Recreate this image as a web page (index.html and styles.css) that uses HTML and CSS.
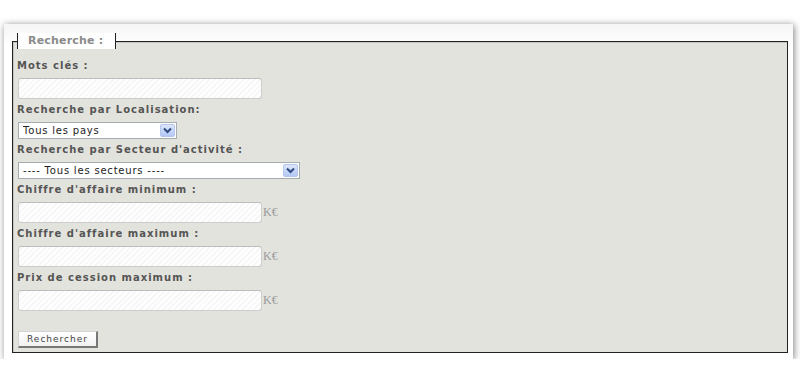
FILE: index.html
```html
<!DOCTYPE html>
<html lang="fr">
<head>
    <meta charset="UTF-8">
    <title>Recherche</title>
    <link rel="stylesheet" href="styles.css">
</head>
<body>
    <div class="card">
        <form class="search-form" action="#">
            <fieldset class="search-box">
                <legend class="search-title">Recherche :</legend>

                <div class="row">
                    <label class="row-label" for="keywords">Mots clés :</label>
                    <input type="text" id="keywords" class="text-input">
                </div>

                <div class="row">
                    <label class="row-label" for="country">Recherche par Localisation:</label>
                    <div class="select-box select-small">
                        <select id="country" class="select">
                            <option>Tous les pays</option>
                        </select>
                        <span class="select-arrow">
                            <svg width="9" height="7" viewBox="0 0 9 7"><path d="M1 1.5 L4.5 5 L8 1.5" fill="none" stroke="#2f4a80" stroke-width="2"/></svg>
                        </span>
                    </div>
                </div>

                <div class="row">
                    <label class="row-label" for="sector">Recherche par Secteur d'activité :</label>
                    <div class="select-box select-wide">
                        <select id="sector" class="select">
                            <option>---- Tous les secteurs ----</option>
                        </select>
                        <span class="select-arrow">
                            <svg width="9" height="7" viewBox="0 0 9 7"><path d="M1 1.5 L4.5 5 L8 1.5" fill="none" stroke="#2f4a80" stroke-width="2"/></svg>
                        </span>
                    </div>
                </div>

                <div class="row">
                    <label class="row-label" for="ca-min">Chiffre d'affaire minimum :</label>
                    <div class="money">
                        <input type="text" id="ca-min" class="text-input">
                        <span class="unit">K€</span>
                    </div>
                </div>

                <div class="row">
                    <label class="row-label" for="ca-max">Chiffre d'affaire maximum :</label>
                    <div class="money">
                        <input type="text" id="ca-max" class="text-input">
                        <span class="unit">K€</span>
                    </div>
                </div>

                <div class="row">
                    <label class="row-label" for="price">Prix de cession maximum :</label>
                    <div class="money">
                        <input type="text" id="price" class="text-input">
                        <span class="unit">K€</span>
                    </div>
                </div>

                <div class="actions">
                    <button type="submit" class="submit-btn">Rechercher</button>
                </div>
            </fieldset>
        </form>
    </div>
</body>
</html>
```

FILE: styles.css
```css
* {
    box-sizing: border-box;
}

body {
    margin: 0;
    background: #fff;
    font-family: 'DejaVu Sans', Verdana, sans-serif;
}

.card {
    width: 789px;
    margin: 24px 0 0 4px;
    padding: 9px 5px 6px 8px;
    background: linear-gradient(#f5f5f5, #fff 22px);
    box-shadow: 1px 1px 7px rgba(0, 0, 0, 0.5);
}

.search-form {
    margin: 0;
}

.search-box {
    min-width: 0;
    margin: 0;
    padding: 6px 4px 4px 4px;
    border: 1px solid #222;
    background: #e3e3dd;
    box-shadow: inset 1px 1px 0 #c4c4c0;
}

.search-title {
    height: 16px;
    padding: 0 12px 0 10px;
    border-left: 1px solid #222;
    border-right: 1px solid #222;
    background: #fff;
    color: #8a8a8a;
    font-size: 11px;
    font-weight: bold;
    line-height: 16px;
    letter-spacing: 0.2px;
}

.row-label {
    display: block;
    margin-top: 3px;
    height: 16px;
    color: #555;
    font-size: 10px;
    font-weight: bold;
    line-height: 16px;
    letter-spacing: 1px;
}

.text-input {
    display: block;
    width: 244px;
    height: 21px;
    margin: 4px 0 0 1px;
    padding: 2px 4px;
    border: 1px solid #cdcdcd;
    border-top-color: #bdbdbd;
    border-radius: 3px;
    background: repeating-linear-gradient(135deg, #fff 0 2px, #f7f7f7 2px 4px);
    font-family: inherit;
    font-size: 11px;
}

.money {
    display: flex;
    align-items: center;
}

.money .text-input {
    flex: none;
}

.unit {
    margin: 4px 0 0 1px;
    color: #9a9a9a;
    font-family: 'Liberation Serif', serif;
    font-size: 12px;
}

.select-box {
    display: flex;
    align-items: center;
    height: 17px;
    margin: 4px 0 0 1px;
    padding: 0 1px 0 0;
    border: 1px solid #a5acb2;
    background: #fff;
}

.select-small {
    width: 159px;
}

.select-wide {
    width: 282px;
}

.select {
    flex: 1;
    min-width: 0;
    height: 15px;
    padding: 0 0 0 4px;
    border: none;
    outline: none;
    background: transparent;
    appearance: none;
    -webkit-appearance: none;
    color: #222;
    font-family: inherit;
    font-size: 10px;
    letter-spacing: 0.8px;
}

.select-arrow {
    display: flex;
    align-items: center;
    justify-content: center;
    width: 15px;
    height: 13px;
    border: 1px solid #b4c6ee;
    border-radius: 2px;
    background: linear-gradient(#dce6fc, #b3c8f6);
}

.actions {
    margin-top: 20px;
}

.submit-btn {
    display: block;
    width: 80px;
    height: 17px;
    margin-left: 1px;
    padding: 0;
    border: 1px solid #d4d4d4;
    border-right: 2px solid #777;
    border-bottom: 2px solid #777;
    background: linear-gradient(#fff, #f2f2f2);
    color: #444;
    font-family: inherit;
    font-size: 9px;
    letter-spacing: 1px;
    line-height: 13px;
}
```
